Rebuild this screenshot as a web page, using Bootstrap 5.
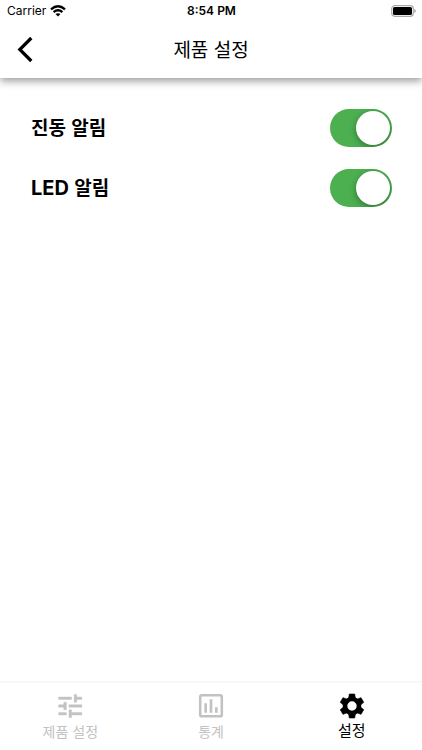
<!DOCTYPE html>
<html lang="ko">
<head>
<meta charset="utf-8">
<meta name="viewport" content="width=device-width, initial-scale=1">
<title>제품 설정</title>
<link href="https://cdn.jsdelivr.net/npm/bootstrap@5.3.0/dist/css/bootstrap.min.css" rel="stylesheet">
<style>
body { font-family: "Noto Sans CJK KR", sans-serif; color: #000; background: #fff; }
.top-area { box-shadow: 0 3px 8px rgba(0,0,0,.4); }
.status-bar { font: 12px/22px Inter, sans-serif; padding: 0 6px 0 7px; }
.status-time { font-weight: 600; }
.side { flex: 1 1 0; }
.title-bar { height: 56px; padding: 0 12px 3px; }
.title-bar h1 { font-size: 19px; line-height: 28px; font-weight: 400; }
.back-btn { width: 28px; height: 32px; }
.settings-list { padding: 20px 30px 20px 31px; }
.setting { height: 60px; }
.setting label { font-size: 19px; line-height: 28px; font-weight: 700; padding-bottom: 2px; }
.latin { font-family: Inter, sans-serif; font-size: 20px; font-weight: 700; }
.form-check-input.toggle { width: 62px; height: 38px; border: 0; border-radius: 19px; background: #c8c8c8; overflow: hidden; display: block; }
.form-check-input.toggle:checked { background: #4caf50; }
.toggle::before { content: ""; display: block; width: 34px; height: 34px; margin: 2px; border-radius: 50%; background: #fff; box-shadow: 0 2px 6px rgba(0,0,0,.35); }
.toggle:checked::before { margin-left: 26px; }
.tab-bar { height: 69px; border-top: 2px solid #f8f8f8; padding-top: 7px; }
.tab-item { font-size: 14px; line-height: 18px; color: #c2c2c2; }
.tab-item.active { font-size: 15px; line-height: 16px; color: #000; }
.tab-item svg { width: 32px; height: 32px; }
</style>
<script src="https://cdn.jsdelivr.net/npm/bootstrap@5.3.0/dist/js/bootstrap.bundle.min.js"></script>
</head>
<body class="min-vh-100 d-flex flex-column">
<header class="top-area">
  <div class="status-bar d-flex align-items-center">
    <div class="side d-flex align-items-center gap-1">
      <span>Carrier</span>
      <svg width="16" height="12" viewBox="0 0 16 12" fill="none" stroke="#000" stroke-width="2.4" aria-hidden="true"><path d="M1 4.300Q8-1.600 15 4.300M3.600 7.100Q8 3.500 12.400 7.100"/><path d="M5.500 9.100Q8 7.200 10.500 9.100L8 11.600z" fill="#000" stroke="none"/></svg>
    </div>
    <span class="status-time">8:54 PM</span>
    <div class="side d-flex justify-content-end">
      <svg width="25" height="12" viewBox="0 0 25 12" aria-hidden="true"><rect x=".7" y=".7" width="21.600" height="10.600" rx="3" fill="#fff" stroke="#aaa" stroke-width="1.200"/><rect x="2" y="2" width="19" height="8" rx="1.600"/><path d="M23.400 4v4q1.400-.6 1.400-2t-1.400-2" fill="#999"/></svg>
    </div>
  </div>
  <div class="title-bar d-flex align-items-center">
    <div class="side d-flex">
      <button type="button" class="back-btn btn p-0 border-0 d-flex align-items-center justify-content-center" aria-label="뒤로">
        <svg width="28" height="28" viewBox="0 0 28 28" fill="none" stroke="#000" stroke-width="3.200" aria-hidden="true"><path d="M19.300 3 7.800 14.500l11.500 11.500"/></svg>
      </button>
    </div>
    <h1 class="m-0">제품 설정</h1>
    <div class="side"></div>
  </div>
</header>
<main class="settings-list flex-grow-1">
  <div class="setting d-flex align-items-center justify-content-between">
    <label for="vibration">진동 알림</label>
    <input class="form-check-input toggle m-0" type="checkbox" role="switch" id="vibration" checked>
  </div>
  <div class="setting d-flex align-items-center justify-content-between">
    <label for="led"><span class="latin">LED</span> 알림</label>
    <input class="form-check-input toggle m-0" type="checkbox" role="switch" id="led" checked>
  </div>
</main>
<nav class="tab-bar row g-0 text-center">
  <a href="#product" class="tab-item col d-flex flex-column align-items-center text-decoration-none">
    <svg viewBox="-.6 -.4 24.800 24.800" fill="currentColor" stroke="currentColor" stroke-width=".3" aria-hidden="true"><path d="M3 17v2h6v-2H3zM3 5v2h10V5H3zm10 16v-2h8v-2h-8v-2h-2v6h2zM7 9v2H3v2h4v2h2V9H7zm14 4v-2H11v2h10zm-6-4h2V7h4V5h-4V3h-2v6z"/></svg>
    <span>제품 설정</span>
  </a>
  <a href="#stats" class="tab-item col d-flex flex-column align-items-center text-decoration-none">
    <svg viewBox="0 0 24 24" aria-hidden="true"><rect x="3.900" y="3.900" width="16.200" height="15.800" rx="1.200" fill="none" stroke="currentColor" stroke-width="1.900"/><path d="M9 17H7v-7h2v7zm4 0h-2V7h2v10zm4 0h-2v-4h2v4z" fill="currentColor"/></svg>
    <span>통계</span>
  </a>
  <a href="#settings" class="tab-item active col d-flex flex-column align-items-center text-decoration-none" aria-current="page">
    <svg viewBox="0 0 32 32" fill="none" stroke="currentColor" aria-hidden="true"><circle cx="16" cy="16" r="7" stroke-width="4.600"/><g fill="currentColor" stroke-width=".6" stroke-linejoin="round"><path id="teeth" d="M13.300 4h5.400l.7 4.500 1.600 1.500H11l1.600-1.500zM13.300 28h5.400l.7-4.500L21 22H11l1.600 1.500z"/><use href="#teeth" transform="rotate(60 16 16)"/><use href="#teeth" transform="rotate(120 16 16)"/></g></svg>
    <span>설정</span>
  </a>
</nav>
</body>
</html>
